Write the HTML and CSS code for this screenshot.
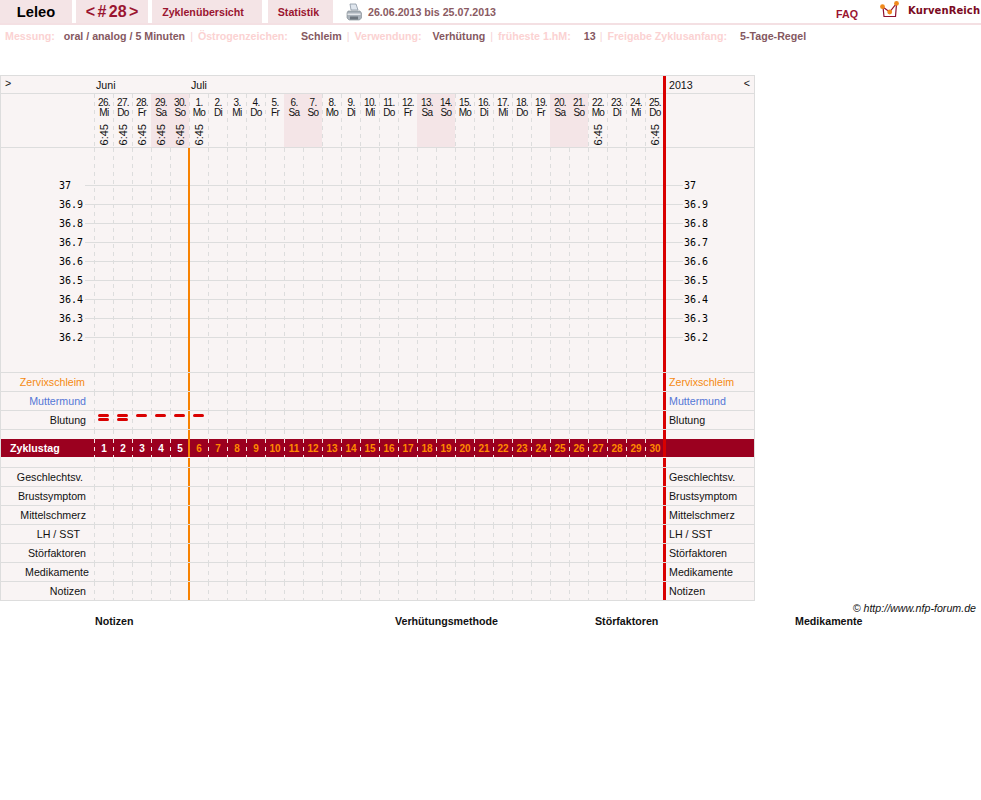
FILE: index.html
```html
<!DOCTYPE html>
<html lang="de">
<head>
<meta charset="utf-8">
<title>Leleo – Zyklus 28</title>
<link rel="stylesheet" href="styles.css">
</head>
<body>
<nav class="nav">
  <a class="tab tab-user">Leleo</a>
  <a class="tab tab-cycle">&lt; # 28 &gt;</a>
  <a class="tab tab-over">Zyklenübersicht</a>
  <a class="tab tab-stat">Statistik</a>
  <svg class="printer" width="16" height="18" viewBox="0 0 16 18">
    <path d="M4 1h6l2 6H5z" fill="#dfe6ee" stroke="#8c97a3" stroke-width=".8"/>
    <path d="M2 8h12l1.500 2v5l-2 2H3l-2-2v-5z" fill="#aab2ba" stroke="#7d868e" stroke-width=".6"/>
    <path d="M1.500 10.500h13v1.500h-13z" fill="#e4e7ea"/>
    <path d="M4 13.500h8v3H4z" fill="#6e767e"/>
  </svg>
  <span class="range">26.06.2013 bis 25.07.2013</span>
  <a class="faq">FAQ</a>
  <svg class="logo" width="20" height="18" viewBox="0 0 20 18">
    <path d="M3 6L4 15.500h11.500L16.500 3" fill="#fff" stroke="#8e1030" stroke-width="1.200"/>
    <path d="M2.500 5.700L9.700 11 16.500 2.400" fill="none" stroke="#8e1030" stroke-width="1.200"/>
    <circle cx="2.500" cy="5.700" r="2.400" fill="#f08a1c"/>
    <circle cx="9.700" cy="11" r="2.400" fill="#f08a1c"/>
    <circle cx="16.500" cy="2.400" r="2.400" fill="#f08a1c"/>
  </svg>
  <span class="brand">KurvenReich</span>
</nav>

<div class="info">
  <span class="k k-mess">Messung:</span><span class="v v-mess">oral / analog / 5 Minuten</span><span class="sep">|</span><span class="k k-oes">Östrogenzeichen:</span><span class="v v-oes">Schleim</span><span class="sep">|</span><span class="k k-use">Verwendung:</span><span class="v v-use">Verhütung</span><span class="sep">|</span><span class="k k-hm">früheste 1.hM:</span><span class="v v-hm">13</span><span class="sep">|</span><span class="k k-fre">Freigabe Zyklusanfang:</span><span class="v">5-Tage-Regel</span>
</div>

<section class="chart">
  <div class="row row-months">
    <div class="lab lab-toggle">&gt;</div>
    <div class="months"><span class="m-jun">Juni</span><span>Juli</span></div>
    <div class="side side-year">2013<span>&lt;</span></div>
  </div>

  <div class="row row-dates">
    <div class="lab"></div>
    <div class="days days-plain">
      <div class="date"><span>26.<br>Mi</span><em>6:45</em></div>
      <div class="date"><span>27.<br>Do</span><em>6:45</em></div>
      <div class="date"><span>28.<br>Fr</span><em>6:45</em></div>
      <div class="date we"><span>29.<br>Sa</span><em>6:45</em></div>
      <div class="date we"><span>30.<br>So</span><em>6:45</em></div>
      <div class="date"><span>1.<br>Mo</span><em>6:45</em></div>
      <div class="date"><span>2.<br>Di</span></div>
      <div class="date"><span>3.<br>Mi</span></div>
      <div class="date"><span>4.<br>Do</span></div>
      <div class="date"><span>5.<br>Fr</span></div>
      <div class="date we"><span>6.<br>Sa</span></div>
      <div class="date we"><span>7.<br>So</span></div>
      <div class="date"><span>8.<br>Mo</span></div>
      <div class="date"><span>9.<br>Di</span></div>
      <div class="date"><span>10.<br>Mi</span></div>
      <div class="date"><span>11.<br>Do</span></div>
      <div class="date"><span>12.<br>Fr</span></div>
      <div class="date we"><span>13.<br>Sa</span></div>
      <div class="date we"><span>14.<br>So</span></div>
      <div class="date"><span>15.<br>Mo</span></div>
      <div class="date"><span>16.<br>Di</span></div>
      <div class="date"><span>17.<br>Mi</span></div>
      <div class="date"><span>18.<br>Do</span></div>
      <div class="date"><span>19.<br>Fr</span></div>
      <div class="date we"><span>20.<br>Sa</span></div>
      <div class="date we"><span>21.<br>So</span></div>
      <div class="date"><span>22.<br>Mo</span><em>6:45</em></div>
      <div class="date"><span>23.<br>Di</span></div>
      <div class="date"><span>24.<br>Mi</span></div>
      <div class="date"><span>25.<br>Do</span><em>6:45</em></div>
    </div>
    <div class="side"></div>
  </div>

  <div class="plot">
    <div class="tick"><span>37</span><span>37</span></div>
    <div class="tick"><span>36.9</span><span>36.9</span></div>
    <div class="tick"><span>36.8</span><span>36.8</span></div>
    <div class="tick"><span>36.7</span><span>36.7</span></div>
    <div class="tick"><span>36.6</span><span>36.6</span></div>
    <div class="tick"><span>36.5</span><span>36.5</span></div>
    <div class="tick"><span>36.4</span><span>36.4</span></div>
    <div class="tick"><span>36.3</span><span>36.3</span></div>
    <div class="tick"><span>36.2</span><span>36.2</span></div>
  </div>

  <div class="row"><div class="lab c-orange pr9">Zervixschleim</div><div class="days"></div><div class="side c-orange">Zervixschleim</div></div>
  <div class="row"><div class="lab c-blue pr8">Muttermund</div><div class="days"></div><div class="side c-blue">Muttermund</div></div>
  <div class="row">
    <div class="lab pr8">Blutung</div>
    <div class="days days-flow">
      <div class="bleed"><i></i><i></i></div>
      <div class="bleed"><i></i><i></i></div>
      <div class="bleed"><i></i></div>
      <div class="bleed"><i></i></div>
      <div class="bleed"><i></i></div>
      <div class="bleed"><i></i></div>
    </div>
    <div class="side">Blutung</div>
  </div>
  <div class="row gap-top"><div class="lab"></div><div class="days"></div><div class="side"></div></div>

  <div class="row row-band">
    <div class="lab lab-band">Zyklustag</div>
    <div class="days days-band">
      <b>1</b><b>2</b><b>3</b><b>4</b><b>5</b><b class="late">6</b><b class="late">7</b><b class="late">8</b><b class="late">9</b><b class="late">10</b><b class="late">11</b><b class="late">12</b><b class="late">13</b><b class="late">14</b><b class="late">15</b><b class="late">16</b><b class="late">17</b><b class="late">18</b><b class="late">19</b><b class="late">20</b><b class="late">21</b><b class="late">22</b><b class="late">23</b><b class="late">24</b><b class="late">25</b><b class="late">26</b><b class="late">27</b><b class="late">28</b><b class="late">29</b><b class="late">30</b>
    </div>
    <div class="side"></div>
  </div>
  <div class="row gap-bottom"><div class="lab"></div><div class="days"></div><div class="side"></div></div>

  <div class="row"><div class="lab pr11">Geschlechtsv.</div><div class="days"></div><div class="side">Geschlechtsv.</div></div>
  <div class="row"><div class="lab pr8">Brustsymptom</div><div class="days"></div><div class="side">Brustsymptom</div></div>
  <div class="row"><div class="lab pr8">Mittelschmerz</div><div class="days"></div><div class="side">Mittelschmerz</div></div>
  <div class="row"><div class="lab pr14">LH / SST</div><div class="days"></div><div class="side">LH / SST</div></div>
  <div class="row"><div class="lab pr8">Störfaktoren</div><div class="days"></div><div class="side">Störfaktoren</div></div>
  <div class="row"><div class="lab pr5">Medikamente</div><div class="days"></div><div class="side">Medikamente</div></div>
  <div class="row"><div class="lab pr8">Notizen</div><div class="days"></div><div class="side">Notizen</div></div>
</section>

<p class="copy">© http://www.nfp-forum.de</p>
<div class="legend">
  <strong class="l-not">Notizen</strong>
  <strong class="l-ver">Verhütungsmethode</strong>
  <strong class="l-sto">Störfaktoren</strong>
  <strong>Medikamente</strong>
</div>
</body>
</html>
```

FILE: styles.css
```css
* { box-sizing: border-box; }

html, body { margin: 0; padding: 0; background: #fff; }

body {
  font: 10.670px/13px "Liberation Sans", Arial, sans-serif;
  color: #111;
}

/* top navigation */
.nav {
  display: flex;
  align-items: flex-start;
  height: 25px;
  border-bottom: 2px solid #f4e0e3;
}

.tab {
  display: block;
  height: 23px;
  background: #f4e4e6;
  color: #9a1530;
  font-weight: bold;
  line-height: 24px;
  text-align: center;
}

.tab-user { width: 72px; color: #000; font-size: 14.670px; }
.tab-cycle { width: 72px; margin-left: 4px; font-size: 16px; word-spacing: -2px; }
.tab-over { width: 110px; margin-left: 4px; padding-right: 8px; }
.tab-stat { width: 65px; margin-left: 6px; padding-right: 4px; }

.printer { margin: 3px 0 0 13px; }

.range {
  margin-left: 6px;
  color: #8a5a62;
  font-weight: bold;
  line-height: 25px;
}

.faq {
  margin-left: auto;
  color: #9a1530;
  font-weight: bold;
  line-height: 28px;
}

.logo { margin: 1px 0 0 22px; }

.brand {
  width: 73px;
  margin-left: 8px;
  color: #7a0a22;
  font: bold 10px/21px "DejaVu Sans", sans-serif;
  letter-spacing: .1px;
  white-space: nowrap;
}

/* measurement summary */
.info {
  display: flex;
  height: 50px;
  padding: 5px 0 0 5px;
  font-weight: bold;
  white-space: nowrap;
}

.k { color: #fbd2d2; }
.v { color: #85585f; }
.sep { color: #f6d4d6; font-weight: normal; }

.k-mess { margin-right: 9px; }
.v-mess { margin-right: 5px; }
.k-oes { margin: 0 13px 0 5px; }
.v-oes { margin-right: 5px; }
.k-use { margin: 0 11px 0 5px; }
.v-use { margin-right: 5px; }
.k-hm { margin: 0 13px 0 5px; }
.v-hm { margin-right: 4px; }
.k-fre { margin: 0 13px 0 5px; }

/* chart table */
.chart {
  width: 755px;
  border: 1px solid #ddd;
  border-bottom: 0;
  background: #f9f4f4;
}

.row {
  display: flex;
  height: 19px;
  border-bottom: 1px solid #ddd;
  line-height: 19px;
}

.row-months { height: 18px; }
.row-dates { height: 54px; }
.gap-top { height: 9px; border-bottom: 0; }
.gap-bottom { height: 10px; }

.lab {
  flex: none;
  width: 93px;
  text-align: right;
  white-space: nowrap;
}

.pr5 { padding-right: 5px; }
.pr8 { padding-right: 8px; }
.pr9 { padding-right: 9px; }
.pr11 { padding-right: 11px; }
.pr14 { padding-right: 14px; }

.c-orange { color: #f58a12; }
.c-blue { color: #5577d6; }

.days {
  display: flex;
  flex: none;
  width: 569px;
  background:
    linear-gradient(#f88200, #f88200) 94px 0 / 2px 100% no-repeat,
    url("data:image/svg+xml,%3Csvg xmlns='http://www.w3.org/2000/svg' width='19' height='8'%3E%3Crect width='1' height='4' fill='%23ddd'/%3E%3C/svg%3E") 0 0 / 19px 8px;
}

.days-plain { background: url("data:image/svg+xml,%3Csvg xmlns='http://www.w3.org/2000/svg' width='19' height='8'%3E%3Crect width='1' height='4' fill='%23ddd'/%3E%3C/svg%3E") 0 0 / 19px 8px; }

.side {
  flex: 1;
  padding-left: 3px;
  border-left: 3px solid #d90000;
  white-space: nowrap;
}

.row-months .side, .row-dates .side { margin-bottom: -1px; }

/* header rows */
.lab-toggle {
  padding-left: 4px;
  text-align: left;
  line-height: 15px;
}

.months {
  display: flex;
  flex: none;
  width: 569px;
  padding-left: 2px;
}

.m-jun { width: 95px; }

.side-year {
  display: flex;
  justify-content: space-between;
  padding-right: 4px;
}

.side-year span { line-height: 15px; }

.date {
  display: flex;
  flex: none;
  flex-direction: column;
  align-items: center;
  width: 19px;
  padding: 4px 0 0 1px;
  font-size: 10px;
  line-height: 9.500px;
  letter-spacing: -0.600px;
  text-align: center;
}

.date.we { background: #f4e5e7; }

.date em {
  margin-top: 7px;
  font-size: 11px;
  font-style: normal;
  letter-spacing: 0;
  line-height: 11px;
  writing-mode: vertical-rl;
  transform: rotate(180deg);
}

/* temperature plot: red and orange rules over the value grid, over the dashed day lines */
.plot {
  height: 225px;
  padding-top: 28px;
  border-bottom: 1px solid #ddd;
  font: 10px/19px "DejaVu Sans Mono", monospace;
  color: #000;
  background-color: #f9f4f4;
  background-image:
    linear-gradient(#d90000, #d90000),
    linear-gradient(#f88200, #f88200),
    repeating-linear-gradient(#ddd 0 1px, transparent 1px 19px),
    repeating-linear-gradient(transparent 0 4px, #f9f4f4 4px 8px),
    repeating-linear-gradient(90deg, #ddd 0 1px, transparent 1px 19px);
  background-position: 662px 0, 187px 0, 84px 37px, 93px 0, 93px 0;
  background-size: 3px 100%, 2px 100%, 598px 153px, 569px 100%, 569px 100%;
  background-repeat: no-repeat;
}

.tick {
  display: grid;
  grid-template-columns: 683px 1fr;
  height: 19px;
  padding-left: 58px;
}

.tick span:last-child { margin-left: -58px; }

/* bleeding marks */
.days-flow { align-items: flex-start; }

.bleed {
  display: flex;
  flex: none;
  flex-direction: column;
  align-items: center;
  gap: 1px;
  width: 19px;
  padding-top: 3px;
}

.bleed i {
  display: block;
  width: 11px;
  height: 3px;
  border-radius: 2px;
  background: #d90000;
}

/* cycle-day band */
.row-band {
  border-bottom-color: #f9f4f4;
  background: #9b001f;
  color: #fff;
  font-weight: bold;
}

.lab-band {
  padding-left: 9px;
  text-align: left;
}

.days-band {
  background:
    linear-gradient(#f88200, #f88200) 94px 0 / 2px 100% no-repeat,
    url("data:image/svg+xml,%3Csvg xmlns='http://www.w3.org/2000/svg' width='19' height='8'%3E%3Crect width='1' height='4' fill='%23f5e5e5'/%3E%3C/svg%3E") 0 0 / 19px 8px;
  font-size: 10px;
}

.days-band b {
  flex: none;
  width: 19px;
  padding-left: 1px;
  text-align: center;
}

.days-band .late { color: #ff8a00; }

/* footer */
.copy {
  margin: 1px 0 0;
  padding-right: 5px;
  font-style: italic;
  text-align: right;
}

.legend {
  display: flex;
  padding-left: 95px;
  color: #111;
}

.l-not { width: 300px; }
.l-ver { width: 200px; }
.l-sto { width: 200px; }
```
